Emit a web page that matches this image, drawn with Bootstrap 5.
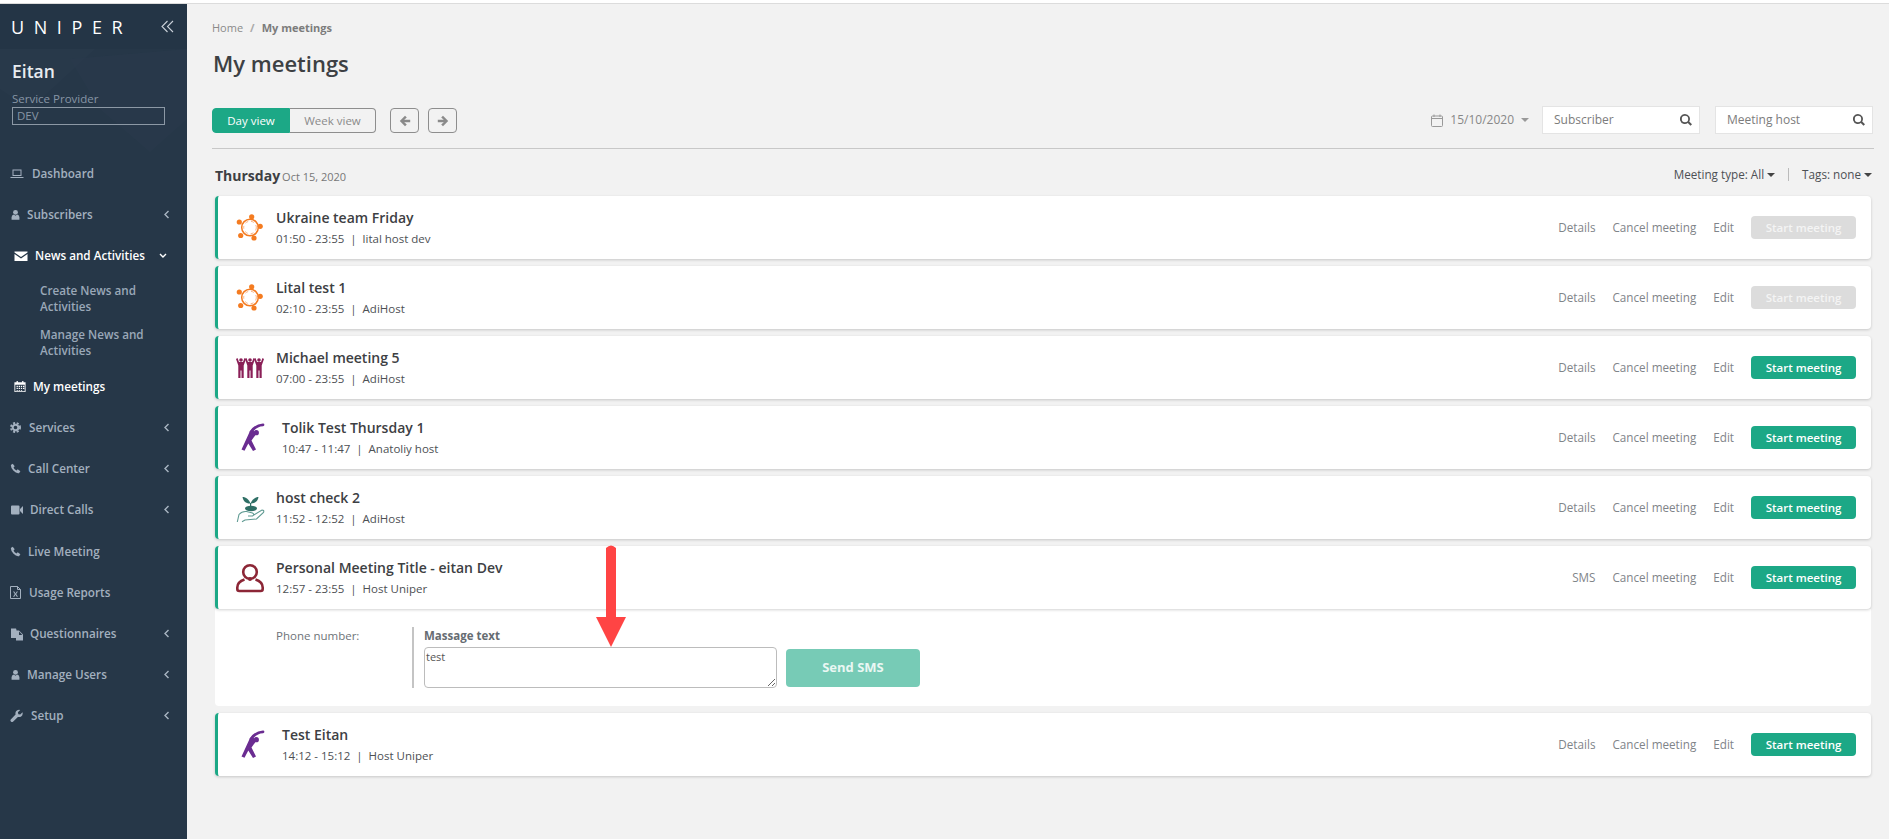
<!DOCTYPE html>
<html lang="en"><head><meta charset="utf-8"><title>My meetings</title>
<link rel="stylesheet" href="https://cdn.jsdelivr.net/npm/bootstrap@5.3.0/dist/css/bootstrap.min.css">
<style>
html,body{height:839px;overflow:hidden}
body{font-family:"Open Sans",sans-serif;background:#f2f2f2;color:#3d4043;font-size:12px}
.top-strip{height:4px;background:#fff;border-bottom:1px solid #dcdcdc}
.shell{height:835px}
.side{width:187px;flex:none;background:#263748;color:#a9b5c2;position:relative;overflow:hidden}
.side-deco{position:absolute;left:0;top:45px;width:187px;height:110px}
.side-head{height:45px;padding:0 13px 0 11px;background:#243546;position:relative}
.logo{color:#fff;font-size:18px;letter-spacing:9.6px;font-weight:400;line-height:1}
.side-user{padding:11px 12px 0;height:104px;position:relative}
.uname{font-size:17.5px;font-weight:600;color:#e8ecf0;line-height:22px}
.urole{font-size:11.5px;color:#8795a5;line-height:14px;margin-top:10px}
.dev-box{border:1px solid #8c98a5;height:18px;width:153px;font-size:11.5px;line-height:16px;padding-left:4px;color:#8795a5;margin-top:1px}
.menu{position:relative;padding:0;margin:0;list-style:none}
.mi{height:41px;display:flex;align-items:center;padding-left:10px;padding-right:17px;font-size:11.7px;font-weight:600;color:#a3b0bf}
.mi svg.ic{width:14px;height:14px;fill:currentColor;flex:none}
.mi .lbl{margin-left:var(--g,7px);flex:1}
.mi .chev{width:7px;height:9px;flex:none;stroke:#a9b5c2;stroke-width:1.4;fill:none}
.mi.on{color:#fff}
.mi.act{padding-left:14px}
.sub-mi{font-size:11.7px;font-weight:600;color:#9aa8b8;line-height:16px;padding:0 20px 0 40px;margin-bottom:12px}
.sub-mi.first{margin-top:6px}
.main{flex:1;padding:0 15px 0 25px;min-width:0;position:relative}
.crumbs{margin:0;padding-top:17px;font-size:11px;line-height:14px;--bs-breadcrumb-divider-color:#aaa;--bs-breadcrumb-item-padding-x:7px;--bs-breadcrumb-margin-bottom:0}
.crumbs .breadcrumb-item{color:#8a8a8a}
.crumbs .breadcrumb-item.active{color:#7c7c7c;font-weight:700}
.ptitle{font-size:22px;font-weight:600;color:#3d4043;line-height:28px;margin:14px 0 0 1px}
.bar{margin-top:31px;height:28px}
.tog{height:25px;display:flex}
.tog .btn{font-size:11.5px;line-height:23px;padding:0;height:25px;border-radius:4px;--bs-btn-border-width:1px}
.b-day{width:78px;background:#1ca886;border-color:#1ca886;color:#fff;border-top-right-radius:0!important;border-bottom-right-radius:0!important}
.b-week{width:86px;background:transparent;border:1px solid #8e8e8e;border-left:0;color:#8a8a8a;border-top-left-radius:0!important;border-bottom-left-radius:0!important}
.b-arr{width:29px;height:25px;border:1px solid #8e8e8e;border-radius:4px;padding:0;display:flex;align-items:center;justify-content:center;background:transparent}
.b-arr svg{width:12px;height:12px;fill:#8a8a8a}
.datep{color:#888;font-size:12px;margin-right:13px}
.datep svg{width:12px;height:13px;margin-right:7px}
.caret-g{display:inline-block;border:4px solid transparent;border-top:4px solid #999;border-bottom:0;margin-left:7px;vertical-align:2px}
.srch{width:158px;height:28px;background:#fff;border:1px solid #e4e4e4;padding:0 7px 0 11px;color:#7c7c7c;font-size:12px}
.srch svg{width:12px;height:12px;fill:#555}
.gap15{margin-left:15px}
.hline{border-top:1px solid #c8c8c8;margin:12px 0 0 0;opacity:1;width:1662px}
.dayrow{height:47px;margin-left:3px;width:1657px;padding-top:5px}
.dayn{font-size:14px;font-weight:700;color:#3d4043}
.dayd{font-size:11px;color:#777;margin-left:2px}
.filters{font-size:11.7px;color:#4d5054}
.caret-d{display:inline-block;border:4px solid transparent;border-top:4px solid #444;border-bottom:0;margin-left:3px;vertical-align:2px}
.vsep{width:1px;height:13px;background:#bbb;margin:0 13px}
.mtg{height:63px;width:1656px;margin:0 0 7px 3px;background:#fff;border-left:3px solid #1ca886;border-radius:4px;box-shadow:0 1px 3px rgba(0,0,0,.18);padding-right:15px;position:relative}
.mtg.open{margin-bottom:0}
.micon{width:28px;height:28px;flex:none;margin-left:18px;overflow:visible}
.mtext{margin-left:12px}
.mtext.wide{margin-left:18px}
.mname{font-size:14px;font-weight:600;color:#3d4043;line-height:20px}
.mmeta{font-size:11.5px;color:#4d5054;line-height:16px;margin-top:3px}
.acts{color:#7f8489;font-size:11.7px}
.acts span{margin-right:17px}
.startb{width:105px;height:23px;line-height:23px;padding:0;border:0;border-radius:4px;font-size:11.5px;font-weight:600;background:#1ca886;color:#fff}
.startb.off{background:#dcdcdc;color:#f4f4f4}
.panel{height:97px;width:1656px;margin:0 0 7px 3px;background:#fff;border-radius:0 0 4px 4px;padding:18px 0 0 61px}
.ph-lab{width:136px;color:#6e7378;font-size:11.5px;line-height:18px}
.sms-col{border-left:2px solid #c4c4c4;height:61px;padding-left:10px}
.sms-lab{font-size:11.5px;font-weight:700;color:#666c72;line-height:18px;margin-bottom:2px}
.sms-ta{width:353px;height:41px;border:1px solid #bcbcbc;border-radius:4px;font-size:11px;padding:2px 1px;color:#555;resize:both;display:block;outline:0;font-family:inherit;line-height:14px}
.sendb{width:134px;height:38px;border:0;border-radius:4px;background:#77cbb6;color:#eaf7f3;font-weight:700;font-size:13px;margin-left:9px;margin-top:22px;padding:0}
.arrow{position:absolute;left:409px;top:540px;width:30px;height:103px}
</style></head><body>
<svg width="0" height="0" style="position:absolute">
<defs>
<symbol id="ring" viewBox="0 0 28 28" overflow="visible"><g fill="none" stroke="#f47b20"><circle cx="14" cy="13.500" r="8.300" stroke-width="1.500"/><circle cx="14" cy="13.500" r="6.300" stroke-width=".8" stroke-dasharray="3 3" opacity=".7"/></g><g fill="#f47b20"><circle cx="15.700" cy="2.800" r="2.600"/><circle cx="24.200" cy="12.300" r="2.600"/><circle cx="18" cy="24" r="2.600"/><circle cx="4.700" cy="21.500" r="2.600"/><circle cx="3.300" cy="8" r="2.600"/></g></symbol>
<symbol id="fig" viewBox="0 0 10 20" overflow="visible"><path d="M0 1 1.500 0 3 4H7L8.500 0 10 1 7.700 7.500V20H5.500V12.500H4.500V20H2.300V7.500Z"/><circle cx="5" cy="2" r="1.800"/></symbol>
<symbol id="people" viewBox="0 0 28 28" overflow="visible"><g fill="#8a1f57"><use href="#fig" x="0" y="4" width="10" height="20"/><use href="#fig" x="9" y="4" width="10" height="20"/><use href="#fig" x="18" y="4" width="10" height="20"/></g></symbol>
<symbol id="stretch" viewBox="0 0 28 28" overflow="visible"><g fill="#6a2c91"><path d="M14 7 5.500 25.500 8.500 26.800 12.300 19.500 17 27 20 25.500 15.500 16.500 18 13 20 10.500 16.500 5Z"/><circle cx="20.300" cy="8.700" r="2.600"/></g><path d="M27 .8C22 1 18 3.500 15 8" fill="none" stroke="#6a2c91" stroke-width="2.800" stroke-linecap="round"/></symbol>
<symbol id="sprout" viewBox="0 0 28 28" overflow="visible"><g fill="#2f6f66"><path d="M14.500 9.500C13 5.500 10 3 6.500 3 7 7 10 9.800 14.500 9.500Z"/><path d="M14.500 9.500C16 5.500 19 3 22.500 3 22 7 19 9.800 14.500 9.500Z"/><path d="M14 9h1.200v4H14z"/><ellipse cx="15" cy="14.500" rx="6" ry="2.700"/></g><path d="M1.300 28 3 20.500Q6 17 10.500 17.500L16.500 19Q19 20.500 16.500 22L12 22M17 21.500 26 16Q28.500 16 27.500 18.500L20.500 25 9 26 6 27.800" fill="none" stroke="#5f9a92" stroke-width="1.100"/></symbol>
<symbol id="person" viewBox="0 0 28 28" overflow="visible"><g fill="none" stroke="#8c2636" stroke-width="2.600"><circle cx="14" cy="8" r="6.800"/><path d="M8.500 15.500C4 17 1.300 19.500 1.300 23.500V25Q1.300 27 3.300 27H24.700Q26.700 27 26.700 25V23.500C26.700 19.500 24 17 19.500 15.500"/></g><circle cx="14" cy="15" r="2" fill="#8c2636"/></symbol>
<symbol id="chl" viewBox="0 0 7 9"><path d="M5.500 1 2 4.500 5.500 8"/></symbol>
<symbol id="user" viewBox="0 0 14 14"><circle cx="7" cy="3.600" r="3.100"/><path d="M2 13V9.500Q2.500 6.800 5 6.500L7 7.800 9 6.500Q11.500 6.800 12 9.500V13Z"/></symbol>
<symbol id="phone" viewBox="0 0 14 14"><path d="M1 2.500 3.500 .8 6 4.200 4.500 5.700Q5.500 8 8.300 9.500L9.800 8 13.200 10.500 11.500 13Q8 13.800 4.500 10T1 2.500Z"/></symbol>
<symbol id="search" viewBox="0 0 12 12"><path d="M5 0a5 5 0 1 0 2.800 9.100L10.500 11.800 12 10.300 9.200 7.600A5 5 0 0 0 5 0Zm0 1.800a3.200 3.200 0 1 1 0 6.400 3.200 3.200 0 0 1 0-6.400Z"/></symbol>
</defs></svg>
<div class="top-strip"></div>
<div class="shell d-flex">
<aside class="side">
<svg class="side-deco" viewBox="0 0 187 110"><path d="M70 10 187 0V70L150 103 100 60Z" fill="#2a3b4d" opacity=".55"/><path d="M0 0H95L30 60 0 40Z" fill="#293a4c" opacity=".6"/></svg>
<div class="side-head d-flex align-items-center justify-content-between">
<span class="logo">UNIPER</span>
<svg width="13" height="13" viewBox="0 0 13 13" fill="none" stroke="#c9d0d8" stroke-width="1.100"><path d="M6.500 1 1 6.500 6.500 12M12 1 6.500 6.500 12 12"/></svg>
</div>
<div class="side-user">
<div class="uname">Eitan</div>
<div class="urole">Service Provider</div>
<div class="dev-box">DEV</div>
</div>
<ul class="menu">
<li class="mi" style="--g:8px"><svg class="ic" viewBox="0 0 14 14"><path d="M2.500 2.500h9v6.500h-9zM3.500 3.500v4.500h7V3.500zM.5 10h13v1H.5z" fill-rule="evenodd"/></svg><span class="lbl">Dashboard</span></li>
<li class="mi"><svg class="ic" style="width:11px"><use href="#user"/></svg><span class="lbl" style="margin-left:6px">Subscribers</span><svg class="chev"><use href="#chl"/></svg></li>
<li class="mi on act" style="--g:7px;padding-right:20px"><svg class="ic" viewBox="0 0 14 14"><path d="M.5 2.500h13v1L7 8 .5 3.500zM.5 5 7 9.500 13.500 5v7H.5z"/></svg><span class="lbl">News and Activities</span><svg class="chev" viewBox="0 0 7 9" style="width:8px;stroke:#fff"><path d="M.5 3 3.500 6 6.500 3"/></svg></li>
<li class="sub-mi first">Create News and Activities</li>
<li class="sub-mi" style="margin-bottom:0">Manage News and Activities</li>
<li class="mi on act" style="--g:7px;margin-top:8px;padding-left:14px"><svg class="ic" viewBox="0 0 14 14" style="width:12px;height:13px"><path fill-rule="evenodd" d="M3 .5h1.500V2h5V.5H11V2h2.500v11.500H.5V2H3zM1.500 5v7.500h11V5zM3 6h1.500v1.500H3zm2.500 0H7v1.500H5.500zM8 6h1.500v1.500H8zm2.500 0H12v1.500h-1.500zM3 8.500h1.500V10H3zm2.500 0H7V10H5.500zm2.500 0h1.500V10H8zm2.500 0H12V10h-1.500zM3 11h1.500v1H3zm2.500 0H7v1H5.500zM8 11h1.500v1H8z"/></svg><span class="lbl">My meetings</span></li>
<li class="mi" style="--g:8px"><svg class="ic" style="width:11px;height:11px;fill:none" viewBox="0 0 14 14" stroke="currentColor"><circle cx="7" cy="7" r="3.600" stroke-width="2.600"/><circle cx="7" cy="7" r="5.800" stroke-width="2.400" stroke-dasharray="2.600 2.100"/></svg><span class="lbl">Services</span><svg class="chev"><use href="#chl"/></svg></li>
<li class="mi" style="--g:5px"><svg class="ic" style="width:11px;height:11px"><use href="#phone"/></svg><span class="lbl" style="margin-left:7px">Call Center</span><svg class="chev"><use href="#chl"/></svg></li>
<li class="mi" style="--g:8px"><svg class="ic" viewBox="0 0 14 14"><path d="M1 3.500Q1 2.500 2 2.500H8.500Q9.500 2.500 9.500 3.500V10.500Q9.500 11.500 8.500 11.500H2Q1 11.500 1 10.500ZM10 6 13 3V11L10 8Z"/></svg><span class="lbl" style="margin-left:6px">Direct Calls</span><svg class="chev"><use href="#chl"/></svg></li>
<li class="mi" style="--g:5px;margin-top:1px"><svg class="ic" style="width:11px;height:11px"><use href="#phone"/></svg><span class="lbl" style="margin-left:7px">Live Meeting</span></li>
<li class="mi" style="--g:7px"><svg class="ic" style="width:11px;height:13px" viewBox="0 0 11 13"><path d="M.5.5h7l3 3v9H.5zM7.500.5v3h3" fill="none" stroke="currentColor"/><path d="M3 5.500h1.300L5.500 7.500 6.700 5.500H8L6.200 8 8 10.700H6.700L5.500 8.800 4.300 10.700H3L4.800 8Z"/></svg><span class="lbl" style="margin-left:8px">Usage Reports</span></li>
<li class="mi" style="--g:6px"><svg class="ic" viewBox="0 0 14 14"><path d="M1 1.500H6L6.500 3V11H1Z"/><path fill-rule="evenodd" d="M6 3.500H9L13 7.500V13.500H6zM9 4.500V8H12.300z"/></svg><span class="lbl" style="margin-left:6px">Questionnaires</span><svg class="chev"><use href="#chl"/></svg></li>
<li class="mi"><svg class="ic" style="width:11px"><use href="#user"/></svg><span class="lbl" style="margin-left:6px">Manage Users</span><svg class="chev"><use href="#chl"/></svg></li>
<li class="mi" style="--g:8px"><svg class="ic" style="width:13px" viewBox="0 0 14 14"><path d="M13.500 3 11 5.500 9 5 8.500 3 11 .5Q8 -.2 6.500 2 5.500 3.500 6 5.500L.8 10.800Q0 12 1 13T3.200 13.200L8.500 8Q10.500 8.500 12 7.500 14.200 6 13.500 3Z"/></svg><span class="lbl">Setup</span><svg class="chev"><use href="#chl"/></svg></li>
</ul>
</aside>
<main class="main">
<ol class="breadcrumb crumbs"><li class="breadcrumb-item">Home</li><li class="breadcrumb-item active">My meetings</li></ol>
<h1 class="ptitle">My meetings</h1>
<div class="bar d-flex align-items-start justify-content-between" style="width:1661px">
<div class="d-flex" style="gap:9px">
<div class="tog"><button class="btn b-day">Day view</button><button class="btn b-week">Week view</button></div>
<div class="d-flex" style="gap:9px;margin-left:5px">
<button class="b-arr"><svg viewBox="0 0 12 12"><path d="M6 .8 7.800 2.500 5.200 4.700H11.200V7.300H5.200L7.800 9.500 6 11.200 .8 6Z"/></svg></button>
<button class="b-arr"><svg viewBox="0 0 12 12"><path d="M6 .8 4.200 2.500 6.800 4.700H.8V7.300H6.800L4.200 9.500 6 11.200 11.200 6Z"/></svg></button>
</div></div>
<div class="d-flex align-items-center" style="margin-top:-2px">
<span class="datep d-flex align-items-center"><svg viewBox="0 0 12 13" fill="none" stroke="#999"><rect x=".5" y="2" width="11" height="10.500" rx="1"/><path d="M.5 4.500h11M3 .5V3M9 .5V3"/></svg>15/10/2020<span class="caret-g"></span></span>
<div class="srch d-flex align-items-center justify-content-between"><span>Subscriber</span><svg><use href="#search"/></svg></div>
<div class="srch d-flex align-items-center justify-content-between gap15"><span>Meeting host</span><svg><use href="#search"/></svg></div>
</div></div>
<hr class="hline">
<div class="dayrow d-flex align-items-center justify-content-between">
<div><span class="dayn">Thursday</span><span class="dayd">Oct 15, 2020</span></div>
<div class="filters d-flex align-items-center"><span>Meeting type: All<span class="caret-d"></span></span><span class="vsep"></span><span>Tags: none<span class="caret-d"></span></span></div>
</div>

<div class="mtg d-flex align-items-center"><svg class="micon"><use href="#ring"/></svg><div class="mtext flex-grow-1"><div class="mname">Ukraine team Friday</div><div class="mmeta">01:50 - 23:55 &nbsp;|&nbsp; lital host dev</div></div><div class="acts d-flex align-items-center"><span>Details</span><span>Cancel meeting</span><span>Edit</span><button class="startb off">Start meeting</button></div></div>
<div class="mtg d-flex align-items-center"><svg class="micon"><use href="#ring"/></svg><div class="mtext flex-grow-1"><div class="mname">Lital test 1</div><div class="mmeta">02:10 - 23:55 &nbsp;|&nbsp; AdiHost</div></div><div class="acts d-flex align-items-center"><span>Details</span><span>Cancel meeting</span><span>Edit</span><button class="startb off">Start meeting</button></div></div>
<div class="mtg d-flex align-items-center"><svg class="micon"><use href="#people"/></svg><div class="mtext flex-grow-1"><div class="mname">Michael meeting 5</div><div class="mmeta">07:00 - 23:55 &nbsp;|&nbsp; AdiHost</div></div><div class="acts d-flex align-items-center"><span>Details</span><span>Cancel meeting</span><span>Edit</span><button class="startb">Start meeting</button></div></div>
<div class="mtg d-flex align-items-center"><svg class="micon"><use href="#stretch"/></svg><div class="mtext wide flex-grow-1"><div class="mname">Tolik Test Thursday 1</div><div class="mmeta">10:47 - 11:47 &nbsp;|&nbsp; Anatoliy host</div></div><div class="acts d-flex align-items-center"><span>Details</span><span>Cancel meeting</span><span>Edit</span><button class="startb">Start meeting</button></div></div>
<div class="mtg d-flex align-items-center"><svg class="micon"><use href="#sprout"/></svg><div class="mtext flex-grow-1"><div class="mname">host check 2</div><div class="mmeta">11:52 - 12:52 &nbsp;|&nbsp; AdiHost</div></div><div class="acts d-flex align-items-center"><span>Details</span><span>Cancel meeting</span><span>Edit</span><button class="startb">Start meeting</button></div></div>
<div class="mtg open d-flex align-items-center"><svg class="micon"><use href="#person"/></svg><div class="mtext flex-grow-1"><div class="mname">Personal Meeting Title - eitan Dev</div><div class="mmeta">12:57 - 23:55 &nbsp;|&nbsp; Host Uniper</div></div><div class="acts d-flex align-items-center"><span>SMS</span><span>Cancel meeting</span><span>Edit</span><button class="startb">Start meeting</button></div></div>
<div class="panel d-flex align-items-start">
<div class="ph-lab">Phone number:</div>
<div class="sms-col"><div class="sms-lab">Massage text</div><textarea class="sms-ta">test</textarea></div>
<button class="sendb">Send SMS</button>
</div>
<div class="mtg d-flex align-items-center"><svg class="micon"><use href="#stretch"/></svg><div class="mtext wide flex-grow-1"><div class="mname">Test Eitan</div><div class="mmeta">14:12 - 15:12 &nbsp;|&nbsp; Host Uniper</div></div><div class="acts d-flex align-items-center"><span>Details</span><span>Cancel meeting</span><span>Edit</span><button class="startb">Start meeting</button></div></div>

<svg class="arrow" viewBox="0 0 30 103"><path d="M10 4Q15 -1 20 4L20 73H30L15 103 0 73H10Z" fill="#ff4444"/></svg>
</main>
</div>
<script src="https://cdn.jsdelivr.net/npm/bootstrap@5.3.0/dist/js/bootstrap.bundle.min.js"></script>
</body></html>
